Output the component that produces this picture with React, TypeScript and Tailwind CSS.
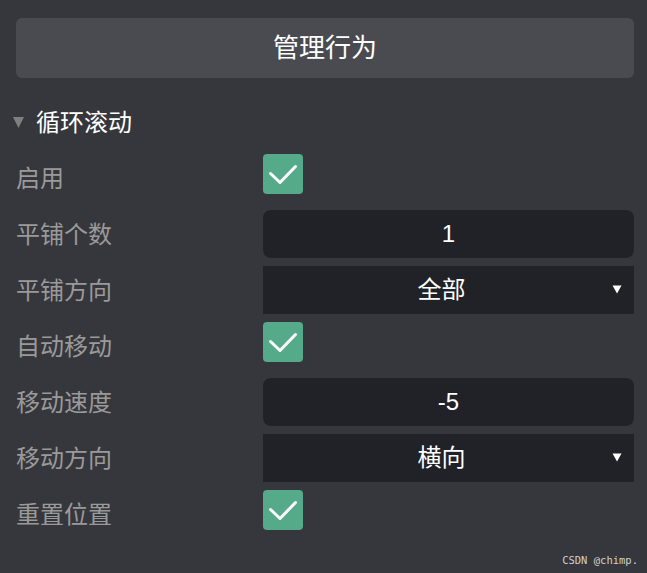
import React from "react";

const FONT = '"Liberation Sans", "Noto Sans CJK SC", sans-serif';

function Check() {
  return (
    <div className="w-10 h-10 rounded-[4px] bg-[#55aa8a] self-start flex items-center justify-center">
      <svg width="40" height="40" viewBox="0 0 40 40">
        <path d="M7.5 19.5 L17 28.5 L32.5 12.5" fill="none" stroke="#fff" strokeWidth="3" strokeLinecap="round" strokeLinejoin="round" />
      </svg>
    </div>
  );
}

function NumInput({ value }: { value: string }) {
  return (
    <div className="flex-1 h-12 rounded-lg bg-[#212227] flex items-center justify-center text-white text-[24px]">
      {value}
    </div>
  );
}

function Select({ value }: { value: string }) {
  return (
    <div className="flex-1 h-12 bg-[#212227] relative flex items-center justify-center pr-[14px] text-white text-[24px]">
      {value}
      <svg className="absolute right-[12px] top-[19px]" width="10" height="9" viewBox="0 0 10 9">
        <path d="M0.5 0.5 L9.5 0.5 L5 8.5 Z" fill="#fff" />
      </svg>
    </div>
  );
}

function Row({ label, children }: { label: string; children: React.ReactNode }) {
  return (
    <div className="h-12 flex items-center">
      <div className="w-[247px] text-[24px] text-[#9a9a9a] leading-none pt-[2px]">{label}</div>
      {children}
    </div>
  );
}

export default function App() {
  return (
    <div className="w-[647px] h-[573px] bg-[#36373c] relative pl-4 pr-[13px] pt-[18px]" style={{ fontFamily: FONT }}>
      <div className="h-[60px] rounded-md bg-[#4a4b50] flex items-center justify-center text-white text-[26px]">
        管理行为
      </div>
      <div className="mt-[22px] h-[46px] flex items-center -ml-[3px]">
        <svg width="11" height="11" viewBox="0 0 11 11" className="mt-[-1px]">
          <path d="M0 0 L11 0 L5.5 11 Z" fill="#7f7f82" />
        </svg>
        <span className="ml-[12px] text-[24px] text-white">循环滚动</span>
      </div>
      <div className="mt-2 flex flex-col gap-2">
        <Row label="启用"><Check /></Row>
        <Row label="平铺个数"><NumInput value="1" /></Row>
        <Row label="平铺方向"><Select value="全部" /></Row>
        <Row label="自动移动"><Check /></Row>
        <Row label="移动速度"><NumInput value="-5" /></Row>
        <Row label="移动方向"><Select value="横向" /></Row>
        <Row label="重置位置"><Check /></Row>
      </div>
      <div className="absolute right-[9px] bottom-[6px] text-[#cfcfcf] leading-none" style={{ fontFamily: '"DejaVu Sans Mono", monospace' }}>
        <span className="text-[10.5px]">CSDN @chimp.</span>
      </div>
    </div>
  );
}
